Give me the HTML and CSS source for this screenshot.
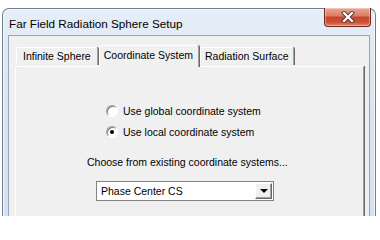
FILE: index.html
```html
<!DOCTYPE html>
<html>
<head>
<meta charset="utf-8">
<link rel="stylesheet" href="styles.css">
</head>
<body>
<div class="window">
  <div class="titlebar">
    <span class="title">Far Field Radiation Sphere Setup</span>
    <div class="close">
      <svg width="14" height="12" viewBox="0 0 14 12">
        <path d="M3 2 L11 10 M11 2 L3 10" stroke="#5a3a34" stroke-width="4.2" stroke-linecap="square"/>
        <path d="M3 2 L11 10 M11 2 L3 10" stroke="#ffffff" stroke-width="2.2" stroke-linecap="square"/>
      </svg>
    </div>
  </div>
  <div class="client">
    <div class="tabs">
      <div class="tab first">Infinite Sphere</div>
      <div class="tab active">Coordinate System</div>
      <div class="tab last">Radiation Surface</div>
    </div>
    <div class="panel">
      <div class="radio-row"><span class="radio"></span><span>Use global coordinate system</span></div>
      <div class="radio-row second"><span class="radio checked"></span><span>Use local coordinate system</span></div>
      <p class="hint">Choose from existing coordinate systems...</p>
      <div class="combo">
        <span class="combo-text">Phase Center CS</span>
        <span class="combo-btn"><span class="tri"></span></span>
      </div>
    </div>
  </div>
</div>
</body>
</html>
```
FILE: styles.css
```css
html, body {
  margin: 0;
  padding: 0;
  overflow: hidden;
  background: #ffffff;
}
body {
  font-family: "Liberation Sans", Arial, sans-serif;
  font-size: 10.5px;
  color: #000;
  height: 216px;
}
.window {
  margin: 8px 0 0 2px;
  width: 372px;
  height: 208px;
  border: 1px solid #6f7d92;
  border-bottom: none;
  border-radius: 7px 7px 0 0;
  background: linear-gradient(to bottom, #e6eef8 0%, #d9e5f2 40%, #d4e1f0 100%);
  box-shadow: inset 1px 1px 0 #f4f8fc, inset -1px 0 0 #f4f8fc;
  display: flex;
  flex-direction: column;
}
.titlebar {
  height: 26px;
  display: flex;
  justify-content: space-between;
  align-items: flex-start;
  padding: 0 4px 0 6px;
}
.title {
  font-size: 11.7px;
  color: #000;
  margin-top: 8px;
}
.close {
  width: 45px;
  height: 18px;
  margin-top: -1px;
  border: 1px solid #6b2a1f;
  border-top: none;
  border-radius: 0 0 4px 4px;
  background: linear-gradient(to bottom, #e9a898 0%, #dc7a63 45%, #c7442a 50%, #cf5236 80%, #e4886b 100%);
  box-shadow: inset 0 0 0 1px rgba(255,255,255,0.35);
  display: flex;
  align-items: center;
  justify-content: center;
}
.client {
  flex: 1;
  margin: 0 5px;
  border: 1px solid #97a6b9;
  border-bottom: none;
  background: #f0f0f0;
  padding: 7px 5px 0 6px;
  display: flex;
  flex-direction: column;
}
.tabs {
  display: flex;
  align-items: flex-end;
  height: 23px;
  padding-left: 1px;
}
.tab {
  height: 17px;
  line-height: 17px;
  padding: 0 6px;
  border-top: 1px solid #ffffff;
  border-left: 1px solid #ffffff;
  border-right: 1px solid #a0a0a0;
  box-shadow: 1px 0 0 #696969;
  border-radius: 2px 2px 0 0;
  background: #f0f0f0;
  margin-bottom: 1px;
  white-space: nowrap;
}
.tab.first {
  padding: 0 6px 0 6px;
  margin-right: 1px;
}
.tab.active {
  height: 21px;
  line-height: 19px;
  padding: 0 5px 0 4px;
  margin: 0 0 -1px 0;
  position: relative;
  z-index: 1;
}
.tab.last {
  padding: 0 5px 0 4px;
  margin-left: 1px;
}
.panel {
  flex: 1;
  border-top: 1px solid #ffffff;
  border-left: 1px solid #ffffff;
  border-right: 1px solid #a0a0a0;
  box-shadow: 1px 0 0 #696969;
  padding-top: 37px;
  display: flex;
  flex-direction: column;
  align-items: flex-start;
}
.radio-row {
  display: flex;
  align-items: center;
  height: 13px;
  margin-left: 90px;
  gap: 5px;
}
.radio-row.second {
  margin-top: 8px;
}
.radio {
  box-sizing: border-box;
  width: 12px;
  height: 12px;
  border-radius: 50%;
  border: 1px solid;
  border-color: #a0a0a0 #ffffff #ffffff #a0a0a0;
  background: #ffffff;
  box-shadow: inset 1px 1px 0 #808080;
  display: flex;
  align-items: center;
  justify-content: center;
}
.radio.checked::after {
  content: "";
  width: 4px;
  height: 4px;
  border-radius: 50%;
  background: #000;
}
.hint {
  margin: 18px 0 0 71px;
  line-height: 13px;
  height: 13px;
}
.combo {
  box-sizing: border-box;
  margin: 12px 0 0 80px;
  width: 178px;
  height: 20px;
  border: 1px solid #828282;
  background: #ffffff;
  display: flex;
  align-items: center;
  justify-content: space-between;
  padding: 0 1px 0 4px;
}
.combo-text {
  line-height: 13px;
}
.combo-btn {
  box-sizing: border-box;
  width: 17px;
  height: 16px;
  background: #f0f0f0;
  border: 1px solid;
  border-color: #ffffff #696969 #696969 #ffffff;
  box-shadow: inset -1px -1px 0 #a0a0a0;
  display: flex;
  align-items: center;
  justify-content: center;
}
.tri {
  width: 0;
  height: 0;
  border-left: 4px solid transparent;
  border-right: 4px solid transparent;
  border-top: 4px solid #000;
}
```
